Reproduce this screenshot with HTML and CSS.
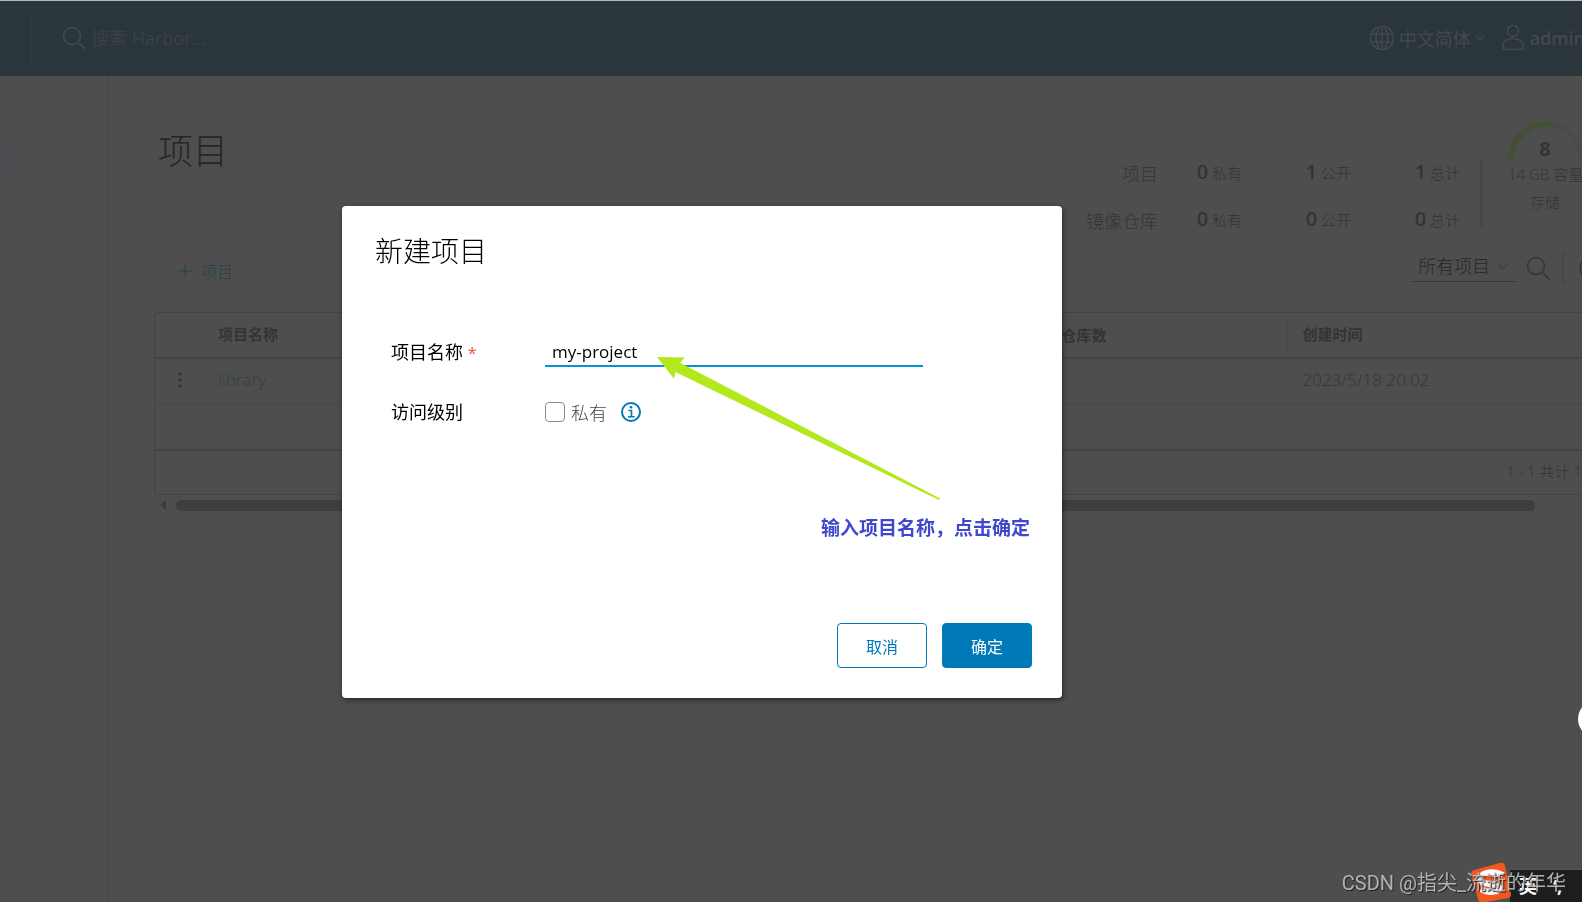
FILE: index.html
```html
<!DOCTYPE html>
<html lang="zh-CN">
<head>
<meta charset="utf-8">
<title>Harbor</title>
<link rel="stylesheet" href="styles.css">
</head>
<body>
<div class="app">
  <header class="header">
    <form class="search">
      <svg class="icon" width="24" height="24" viewBox="0 0 24 24"><circle cx="10" cy="10" r="8.5"/><path d="M17 17l6 6"/></svg>
      <input class="search-input" type="text" placeholder="搜索 Harbor..." aria-label="搜索">
    </form>
    <nav class="header-actions">
      <button class="header-button" type="button">
        <svg class="icon" width="26" height="26" viewBox="0 0 26 26"><circle cx="13" cy="13" r="11.5"/><path d="M13 3v20M4 9h18M4 17h18M10 3.500C6 9 6 17 10 22.500M16 3.500C20 9 20 17 16 22.500"/></svg>
        <span>中文简体</span>
        <svg class="icon" width="10" height="8" viewBox="0 0 10 8"><path d="M1 2l4 4 4-4"/></svg>
      </button>
      <button class="header-button user" type="button">
        <svg class="icon" width="24" height="28" viewBox="0 0 24 28"><circle cx="12" cy="7" r="5.500"/><path d="M2 25.500v-6c2-3 6-5 10-5s8 2 10 5v6z" stroke-linejoin="round"/></svg>
        <span class="user-name">admin</span>
      </button>
    </nav>
  </header>
  <div class="body">
    <aside class="sidebar"><div class="sidebar-active"></div></aside>
    <main class="main">
      <section class="summary">
        <h1 class="page-title">项目</h1>
        <div class="stats">
          <div class="stat-label">项目</div>
          <div class="stat"><b>0</b> 私有</div>
          <div class="stat"><b>1</b> 公开</div>
          <div class="stat"><b>1</b> 总计</div>
          <div class="stat-label">镜像仓库</div>
          <div class="stat"><b>0</b> 私有</div>
          <div class="stat"><b>0</b> 公开</div>
          <div class="stat"><b>0</b> 总计</div>
        </div>
        <div class="stats-divider"></div>
        <div class="gauge">
          <div class="gauge-dial">
            <svg width="76" height="38" viewBox="0 0 76 38" fill="none" stroke-width="6"><path d="M3 38a35 35 0 0 1 70 0" stroke="#4b4b4b"/><path d="M3 38a35 35 0 0 1 42-34.300" stroke="#435037"/></svg>
            <b class="gauge-value">8</b>
          </div>
          <div class="gauge-line">14 GB 容量</div>
          <div class="gauge-line gauge-name">存储</div>
        </div>
      </section>
      <div class="toolbar">
        <button class="add" type="button">
          <svg class="icon" width="16" height="16" viewBox="0 0 16 16"><path d="M8 1v14M1 8h14"/></svg>
          <span>项目</span>
        </button>
        <div class="filters">
          <div class="filter">
            <select class="filter-select" aria-label="筛选"><option>所有项目</option></select>
            <svg class="icon filter-arrow" width="12" height="8" viewBox="0 0 12 8"><path d="M1 1l5 5 5-5"/></svg>
          </div>
          <button class="icon-button" type="button" aria-label="搜索项目">
            <svg class="icon" width="24" height="24" viewBox="0 0 24 24"><circle cx="10" cy="10" r="8.500"/><path d="M17 17l6 6"/></svg>
          </button>
          <div class="filter-divider"></div>
          <button class="icon-button refresh" type="button" aria-label="刷新">
            <svg class="icon" width="24" height="24" viewBox="0 0 24 24"><path d="M20 6a10 10 0 1 0 2 8M20 1v5h-5"/></svg>
          </button>
        </div>
      </div>
      <div class="grid-box">
        <table class="grid">
          <colgroup><col class="col-action"><col class="col-name"><col class="col-count"><col></colgroup>
          <thead>
            <tr><th></th><th><div class="th-cell">项目名称</div></th><th>镜像仓库数</th><th><div class="th-cell">创建时间</div></th></tr>
          </thead>
          <tbody>
            <tr>
              <td class="action"><button class="icon-button" type="button" aria-label="操作"><svg width="4" height="16" viewBox="0 0 4 16" fill="#333"><circle cx="2" cy="2" r="1.700"/><circle cx="2" cy="8" r="1.700"/><circle cx="2" cy="14" r="1.700"/></svg></button></td>
              <td><a class="link" href="#">library</a></td><td></td><td>2023/5/18 20:02</td>
            </tr>
          </tbody>
        </table>
        <div class="grid-footer">1 - 1 共计 1</div>
      </div>
      <div class="scroll">
        <svg width="6" height="10" viewBox="0 0 6 10" fill="#3b3b3b"><path d="M6 0v10L0 5z"/></svg>
        <div class="scroll-thumb"></div>
      </div>
    </main>
  </div>
</div>

<div class="overlay">
  <form class="dialog" role="dialog" aria-labelledby="dialog-title">
    <h2 class="dialog-title" id="dialog-title">新建项目</h2>
    <div class="fields">
      <label class="field-label" for="name">项目名称 <span class="required">*</span></label>
      <input class="name-input" id="name" type="text" value="my-project">
      <span class="field-label">访问级别</span>
      <div class="access">
        <input class="check" id="private" type="checkbox">
        <label for="private">私有</label>
        <svg class="info" width="20" height="20" viewBox="0 0 20 20" fill="none" stroke="#0079b8"><circle cx="10" cy="10" r="9" stroke-width="2"/><path d="M7.500 8.500h3v6M7 14.700h6.500" stroke-width="1.600"/><circle cx="10" cy="5.300" r="1.300" fill="#0079b8" stroke="none"/></svg>
      </div>
    </div>
    <div class="dialog-actions">
      <button class="button" type="button">取消</button>
      <button class="button primary" type="button">确定</button>
    </div>
    <svg class="arrow" width="284" height="144" viewBox="0 0 284 144" fill="#b2e81c"><path d="M0 0l28 .500-5 5.200 260 135.800-1 1.500L18.300 15l-1.200 7z"/></svg>
    <p class="note">输入项目名称，点击确定</p>
  </form>
</div>

<div class="float-ball"></div>
<div class="ime">
  <svg class="ime-logo" width="42" height="40" viewBox="0 0 42 40"><path d="M4 8L30 1q4-1 5 3l6 28q0 3-3 4L12 41q-3 0-4-4L1 12q0-3 3-4z" fill="#f1571f"/><path d="M33 13C24 8 9 10 10 18c1 6 19 2 19 8 0 5-12 5-18 1" fill="none" stroke="#fff" stroke-width="6"/></svg>
  <div class="ime-bar"><b>英</b><b>‘,</b></div>
</div>
<div class="watermark">CSDN @指尖_流逝的年华</div>
</body>
</html>
```

FILE: styles.css
```css
* { box-sizing: border-box; }

body {
  margin: 0;
  background: #4e4e4e;
  color: #343434;
  font-family: "Open Sans", "Noto Sans CJK SC", sans-serif;
  font-size: 15px;
  overflow: hidden;
}

button, input, select { font: inherit; color: inherit; }
button { padding: 0; border: 0; background: none; }
.icon { fill: none; stroke: currentColor; stroke-width: 1.5; flex: none; }

.app { display: flex; flex-direction: column; height: 100vh; overflow: hidden; }

.header {
  display: flex;
  flex: none;
  justify-content: space-between;
  align-items: center;
  height: 76px;
  padding: 0 0 2px 31px;
  border-top: 1px solid #b4b8ba;
  background: #2a353c;
  color: #434a4e;
  font-size: 18px;
}
.search {
  display: flex;
  align-items: center;
  gap: 5px;
  height: 50px;
  padding-left: 30px;
  border-left: 1px solid #2f3a41;
}
.search-input { width: 200px; padding: 0; border: 0; background: none; }
.search-input::placeholder { color: #3a4246; opacity: 1; }
.header-actions { display: flex; gap: 16px; margin-right: -3px; }
.header-button { display: flex; align-items: center; gap: 4px; white-space: nowrap; }
.user { gap: 5px; }
.user-name { font-weight: 600; }

.body { display: flex; flex: 1; min-height: 0; }
.sidebar { flex: none; width: 109px; padding-top: 70px; border-right: 1px solid #444; }
.sidebar-active { width: 16px; height: 30px; background: #4a4c50; }
.main { flex: 1; min-width: 0; padding: 45px 0 0 45px; overflow: hidden; }

.summary { display: flex; align-items: flex-start; height: 123px; }
.page-title {
  flex: 1;
  margin: 0;
  padding-left: 4px;
  color: #262626;
  font-size: 35px;
  font-weight: 300;
  line-height: 60px;
}
.stats {
  display: grid;
  grid-template-columns: auto 84px 109px 109px;
  grid-auto-rows: 47px;
  align-items: center;
  margin-top: 29px;
  text-align: right;
  line-height: 24px;
}
.stat-label { font-size: 18px; font-weight: 300; }
.stat { padding-bottom: 3px; font-weight: 300; }
.stat b { font-size: 20px; font-weight: 600; }
.stats-divider { width: 3px; height: 67px; margin: 39px 25px 0 20px; background: #484848; }
.gauge { width: 74px; white-space: nowrap; }
.gauge-dial { position: relative; height: 39px; }
.gauge-value {
  position: absolute;
  left: 0;
  top: 16px;
  width: 74px;
  text-align: center;
  font-size: 20px;
  line-height: 24px;
}
.gauge-line { font-weight: 300; line-height: 28px; }
.gauge-name { text-align: center; }

.toolbar {
  display: flex;
  justify-content: space-between;
  align-items: center;
  height: 48px;
  margin-bottom: 20px;
  padding-left: 23px;
}
.add { display: flex; align-items: center; gap: 8px; padding-top: 5px; color: #2a404c; font-size: 16px; font-weight: 300; }
.add .icon { stroke-width: 1; }
.filters { display: flex; align-items: center; margin-right: -20px; }
.filter { position: relative; width: 105px; margin: 0 9px 3px 0; border-bottom: 1px solid #3a3a3a; }
.filter-select {
  width: 100%;
  height: 30px;
  padding: 0 0 0 6px;
  border: 0;
  background: none;
  color: #262626;
  font-size: 18px;
  font-weight: 300;
  appearance: none;
}
.filter-arrow { position: absolute; right: 8px; top: 12px; pointer-events: none; stroke-width: 1; }
.icon-button { display: inline-flex; }
.filter-divider { width: 2px; height: 30px; margin: 0 14px 0 12px; background: #464646; }

.grid-box { border: 1px solid #444; border-right: 0; border-radius: 4px 0 0 4px; }
.grid { width: 100%; border-collapse: collapse; table-layout: fixed; }
.grid th, .grid td { height: 45px; padding: 0 0 2px 16px; text-align: left; }
.grid th { border-bottom: 2px solid #444; font-weight: 600; }
.grid td { border-bottom: 1px solid #464646; font-size: 17px; font-weight: 300; }
.grid .action { padding: 2px 0 0 23px; }
.th-cell { margin-left: -16px; padding-left: 15px; border-left: 1px solid #484848; line-height: 31px; }
.col-action { width: 47px; }
.col-name { width: 57%; }
.col-count { width: 19%; }
.link { color: #2a404c; text-decoration: none; }
.grid-footer {
  margin-top: 45px;
  padding-bottom: 2px;
  border-top: 2px solid #444;
  font-weight: 300;
  line-height: 41px;
  text-align: right;
}
.scroll { display: flex; align-items: center; gap: 10px; padding: 5px 47px 0 6px; }
.scroll-thumb { flex: 1; height: 11px; border-radius: 6px; background: #3e3e3e; }

.overlay {
  position: fixed;
  inset: 0;
  display: flex;
  align-items: center;
  justify-content: center;
  padding: 2px 178px 0 0;
}
.dialog {
  position: relative;
  display: flex;
  flex-direction: column;
  width: 720px;
  padding: 30px;
  border-radius: 4px;
  background: #fff;
  box-shadow: 1px 2px 5px rgba(0, 0, 0, .5);
  color: #000;
}
.dialog-title { margin: 0 0 71px; padding-left: 3px; font-size: 28px; font-weight: 300; line-height: 30px; }
.fields {
  display: grid;
  grid-template-columns: 154px 378px;
  row-gap: 29px;
  margin-bottom: 196px;
  padding-left: 19px;
  font-size: 18px;
}
.field-label { line-height: 30px; }
.required { color: #e0543c; font-size: 16px; }
.name-input { height: 30px; padding: 0 7px; border: 0; border-bottom: 2px solid #0095d3; outline: 0; font-size: 17px; }
.access { display: flex; align-items: center; gap: 6px; height: 30px; color: #444; font-weight: 300; }
.check { appearance: none; width: 20px; height: 20px; margin: 0; border: 1px solid #8c8c8c; border-radius: 4px; }
.info { margin-left: 8px; }
.dialog-actions { display: flex; justify-content: flex-end; gap: 15px; }
.button {
  width: 90px;
  height: 45px;
  border: 1px solid #0079b8;
  border-radius: 4px;
  color: #0079b8;
  font-size: 16px;
}
.primary { background: #0079b8; color: #fff; }
.arrow { position: absolute; left: 315px; top: 151px; }
.note {
  position: absolute;
  right: 32px;
  top: 308px;
  margin: 0;
  color: #3f48cc;
  font-size: 19px;
  font-weight: 700;
  line-height: 28px;
}

.float-ball { position: fixed; right: -34px; top: 700px; width: 38px; height: 38px; border-radius: 50%; background: #fff; }
.ime { position: fixed; right: 0; bottom: 0; display: flex; align-items: flex-end; height: 40px; }
.ime-logo { position: relative; z-index: 1; margin-right: -2px; }
.ime-bar {
  display: flex;
  gap: 16px;
  width: 72px;
  height: 33px;
  padding-left: 9px;
  border-top: 1px solid #555;
  background: #1e1e1e;
  color: #fff;
  font-size: 18px;
  line-height: 33px;
  overflow: hidden;
  white-space: nowrap;
}
.watermark {
  position: fixed;
  right: 16px;
  bottom: 5px;
  z-index: 2;
  color: rgba(200, 200, 200, .85);
  font-family: Roboto, "Noto Sans CJK SC", sans-serif;
  font-size: 20px;
  font-weight: 400;
  line-height: 28px;
  text-shadow: 1px 1px 1px #222;
}
```
